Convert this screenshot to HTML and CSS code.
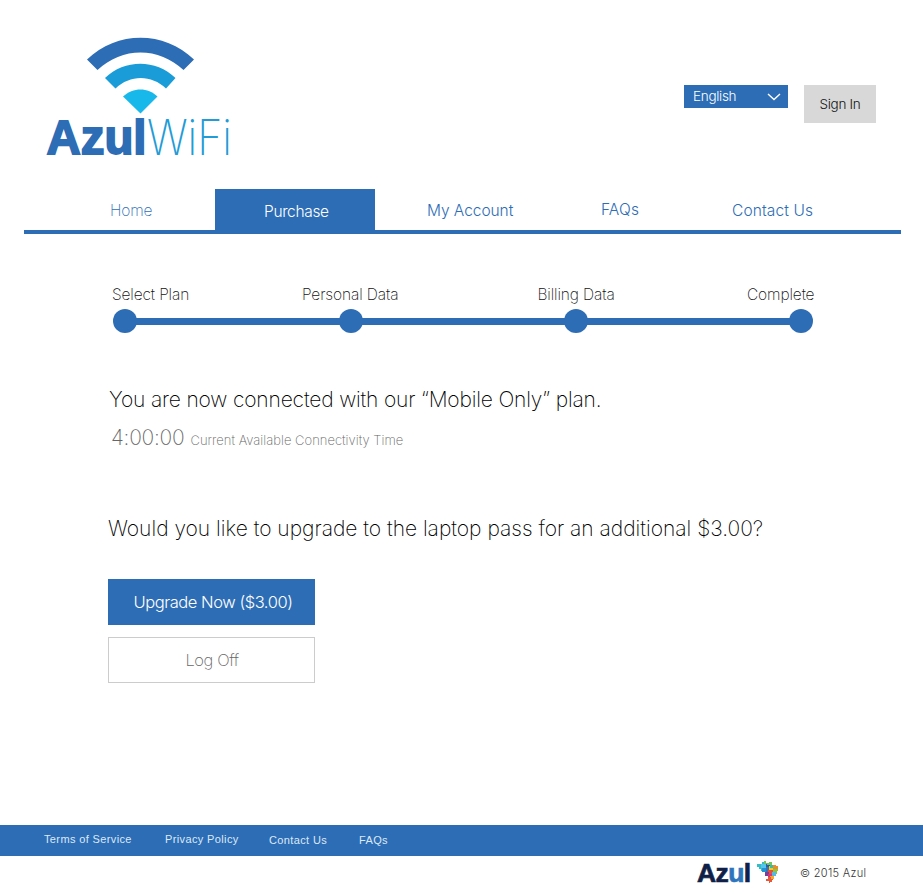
FILE: index.html
```html
<!DOCTYPE html>
<html lang="en">
<head>
<meta charset="utf-8">
<title>Azul WiFi</title>
<link rel="stylesheet" href="styles.css">
</head>
<body>
<header class="header">
  <svg class="logo" width="200" height="142" viewBox="40 32 200 142" role="img" aria-label="Azul WiFi">
    <path fill="#2d6db5" d="M87 59.500C117 30.500 164 30.500 194 59.500L183.500 70C159 46.500 122 46.500 97.500 70Z"/>
    <path fill="#1a9cd8" d="M105 78C124.500 59 156 59 175.500 78L166 88.500C151.500 74.500 130 74.500 115.500 88.500Z"/>
    <path fill="#18b9ea" d="M123 96.500C133 87 148 87 157.500 96.500L140.500 113.500Z"/>
    <text class="logo-azul" x="46.500" y="154" textLength="100" lengthAdjust="spacingAndGlyphs">Azul</text>
    <text class="logo-wifi" x="147" y="155" textLength="85" lengthAdjust="spacingAndGlyphs">WiFi</text>
  </svg>
  <div class="tools">
    <button class="language"><span>English</span>
      <svg width="14" height="8" viewBox="0 0 14 8"><path d="M1 1L7 6.500L13 1" fill="none" stroke="#fff" stroke-width="1.400"/></svg>
    </button>
    <button class="signin"><span>Sign In</span></button>
  </div>
</header>
<nav class="nav">
  <a class="home"><span>Home</span></a>
  <a class="active"><span>Purchase</span></a>
  <a class="account"><span>My Account</span></a>
  <a class="faqs"><span>FAQs</span></a>
  <a class="contact"><span>Contact Us</span></a>
</nav>
<main class="main">
  <section class="progress">
    <div class="labels"><span>Select Plan</span><span>Personal Data</span><span>Billing Data</span><span>Complete</span></div>
    <div class="track"><i></i><b></b><i></i><b></b><i></i><b></b><i></i></div>
  </section>
  <h1 class="status">You are now connected with our “Mobile Only” plan.</h1>
  <p class="time"><strong>4:00:00</strong><span>Current Available Connectivity Time</span></p>
  <h2 class="question">Would you like to upgrade to the laptop pass for an additional $3.00?</h2>
  <button class="upgrade"><span>Upgrade Now ($3.00)</span></button>
  <button class="logoff"><span>Log Off</span></button>
</main>
<footer>
  <div class="links"><a class="terms">Terms of Service</a><a class="privacy">Privacy Policy</a><a class="support">Contact Us</a><a class="help">FAQs</a></div>
  <div class="legal">
    <span class="mark">Az<span class="mark-u">u</span>l</span>
    <svg class="map" width="22" height="23" viewBox="757 861 22 23" aria-hidden="true">
      <path fill="#35bdc5" d="M757 864h5v-2h4v9h-5v-2h-2v-2h-2z"/>
      <path fill="#54c6ee" d="M761 864h5v4h-5z"/>
      <path fill="#245faf" d="M766 863h5v6h-5z"/>
      <path fill="#74c55a" d="M764 861h2v2h3v-1h3v3h-5v-1h-3z"/>
      <path fill="#2494d5" d="M762 868h5v4h-5z"/>
      <path fill="#3974b9" d="M766 867h3v5h-3z"/>
      <path fill="#f1cb25" d="M769 866h4v4h-4z"/>
      <path fill="#35bda5" d="M770 865h4v3h-4z"/>
      <path fill="#f08a28" d="M773 865h3v1h2v3h-5z"/>
      <path fill="#8ac63f" d="M773 869h5v2h-1v3h-4z"/>
      <path fill="#e84e3b" d="M768 870h5v4h-5z"/>
      <path fill="#58b8dd" d="M772 872h4v4h-4z"/>
      <path fill="#7a3f98" d="M765 872h4v4h-4z"/>
      <path fill="#d7337e" d="M768 874h4v3h-4z"/>
      <path fill="#f5a623" d="M770 876h4v3h-4z"/>
      <path fill="#e65839" d="M768 877h3v2h2v1h-1v2h-2v1h-1v-2h-3v-2h2z"/>
    </svg>
    <span class="copyright">© 2015 Azul</span>
  </div>
</footer>
</body>
</html>
```

FILE: styles.css
```css
* { box-sizing: border-box; }
body { margin: 0; width: 923px; height: 894px; display: flex; flex-direction: column; background: #fff; font-family: Inter, "Liberation Sans", sans-serif; font-weight: 250; color: #111; }
button { font: inherit; border: 0; padding: 0; margin: 0; display: flex; align-items: center; justify-content: center; }
.header { height: 189px; padding: 32px 47px 0 40px; display: flex; justify-content: space-between; align-items: flex-start; }
.logo { display: block; }
.logo-azul { font: 700 48px "Liberation Sans", sans-serif; fill: #2d6db5; stroke: #2d6db5; stroke-width: 1.8px; }
.logo-wifi { font: 200 49px Inter, sans-serif; fill: #229bd6; }
.tools { display: flex; gap: 16px; padding-top: 53px; align-items: flex-start; }
.language { width: 104px; height: 23px; padding: 0 7px 0 9px; background: #2d6db5; color: #fff; font-size: 13.5px; font-weight: 300; justify-content: space-between; letter-spacing: -.3px; }
.language span { padding-bottom: 1px; }
.signin { width: 72px; height: 38px; padding-bottom: 1px; background: #d8d8d8; color: #111; font-size: 13.5px; font-weight: 300; letter-spacing: -.3px; }
.nav { height: 45px; margin: 0 22px 0 24px; border-bottom: 4px solid #2d6db5; display: flex; color: #2d6db5; font-size: 15.5px; font-weight: 300; }
.nav a { flex: none; padding-top: 12px; line-height: 19px; }
.nav .home { width: 191px; padding-left: 86px; letter-spacing: -.15px; font-weight: 250; }
.nav .active { width: 160px; padding: 13px 0 0 49px; background: #2d6db5; color: #fff; letter-spacing: -.35px; }
.nav .account { width: 226px; padding-left: 52px; letter-spacing: -.05px; }
.nav .faqs { width: 131px; padding-top: 11px; letter-spacing: .15px; }
.nav .contact { letter-spacing: .12px; }
.main { flex: 1; padding: 51px 108px 0; }
.labels { display: grid; grid-template-columns: 190px 235.5px 209.5px auto; padding-left: 4px; font-size: 15.5px; line-height: 20px; white-space: nowrap; color: #111; letter-spacing: -.12px; }
.track { height: 24px; padding-left: 5px; margin-top: 4px; width: 705px; display: flex; align-items: center; }
.track i { width: 24px; height: 24px; background: #2d6db5; border-radius: 50%; flex: none; }
.track b { height: 7px; background: #2d6db5; flex: 1; margin: 0 -1px; }
.track b:nth-of-type(1) { flex: 0 0 204px; }
h1, h2, p { margin: 0; font-weight: 250; }
.status { margin-top: 52px; padding-left: 1px; font-size: 21px; line-height: 30px; letter-spacing: -.17px; white-space: nowrap; color: #000; }
.time { margin: 8px 0 0 3px; line-height: 30px; color: #666; display: flex; align-items: baseline; gap: 6px; }
.time strong { font-size: 21px; font-weight: 250; letter-spacing: -.25px; }
.time span { font-size: 13px; letter-spacing: .02px; }
.question { margin-top: 59px; font-size: 21px; line-height: 30px; letter-spacing: -.01px; white-space: nowrap; color: #000; }
.upgrade, .logoff { width: 207px; height: 46px; font-size: 16.5px; letter-spacing: -.4px; }
.upgrade { margin-top: 35px; padding-left: 3px; background: #2d6db5; color: #fff; font-weight: 300; letter-spacing: -.45px; }
.logoff { margin-top: 12px; padding-left: 1px; background: #fff; color: #666; border: 1px solid #ccc; }
.links { height: 31px; padding-left: 44px; background: #2d6db5; color: #dce9f7; display: flex; font-family: "Liberation Sans", sans-serif; font-size: 11px; line-height: 29px; letter-spacing: .37px; }
.terms { width: 121px; }
.privacy { width: 104px; }
.support { width: 90px; }
.support, .help { padding-top: 1px; }
.legal { height: 38px; display: flex; align-items: flex-start; padding-left: 697px; }
.mark { width: 54px; padding-top: 2px; margin-right: 6px; font: 700 26.5px/30px "Liberation Sans", sans-serif; letter-spacing: -.6px; color: #101f47; -webkit-text-stroke: .7px currentColor; white-space: nowrap; }
.mark-u { color: #2d75bd; }
.map { margin-top: 5px; }
.copyright { margin-left: 21px; padding-top: 7px; line-height: 20px; font-size: 11px; letter-spacing: .3px; white-space: nowrap; color: #333; font-weight: 300; }
```
